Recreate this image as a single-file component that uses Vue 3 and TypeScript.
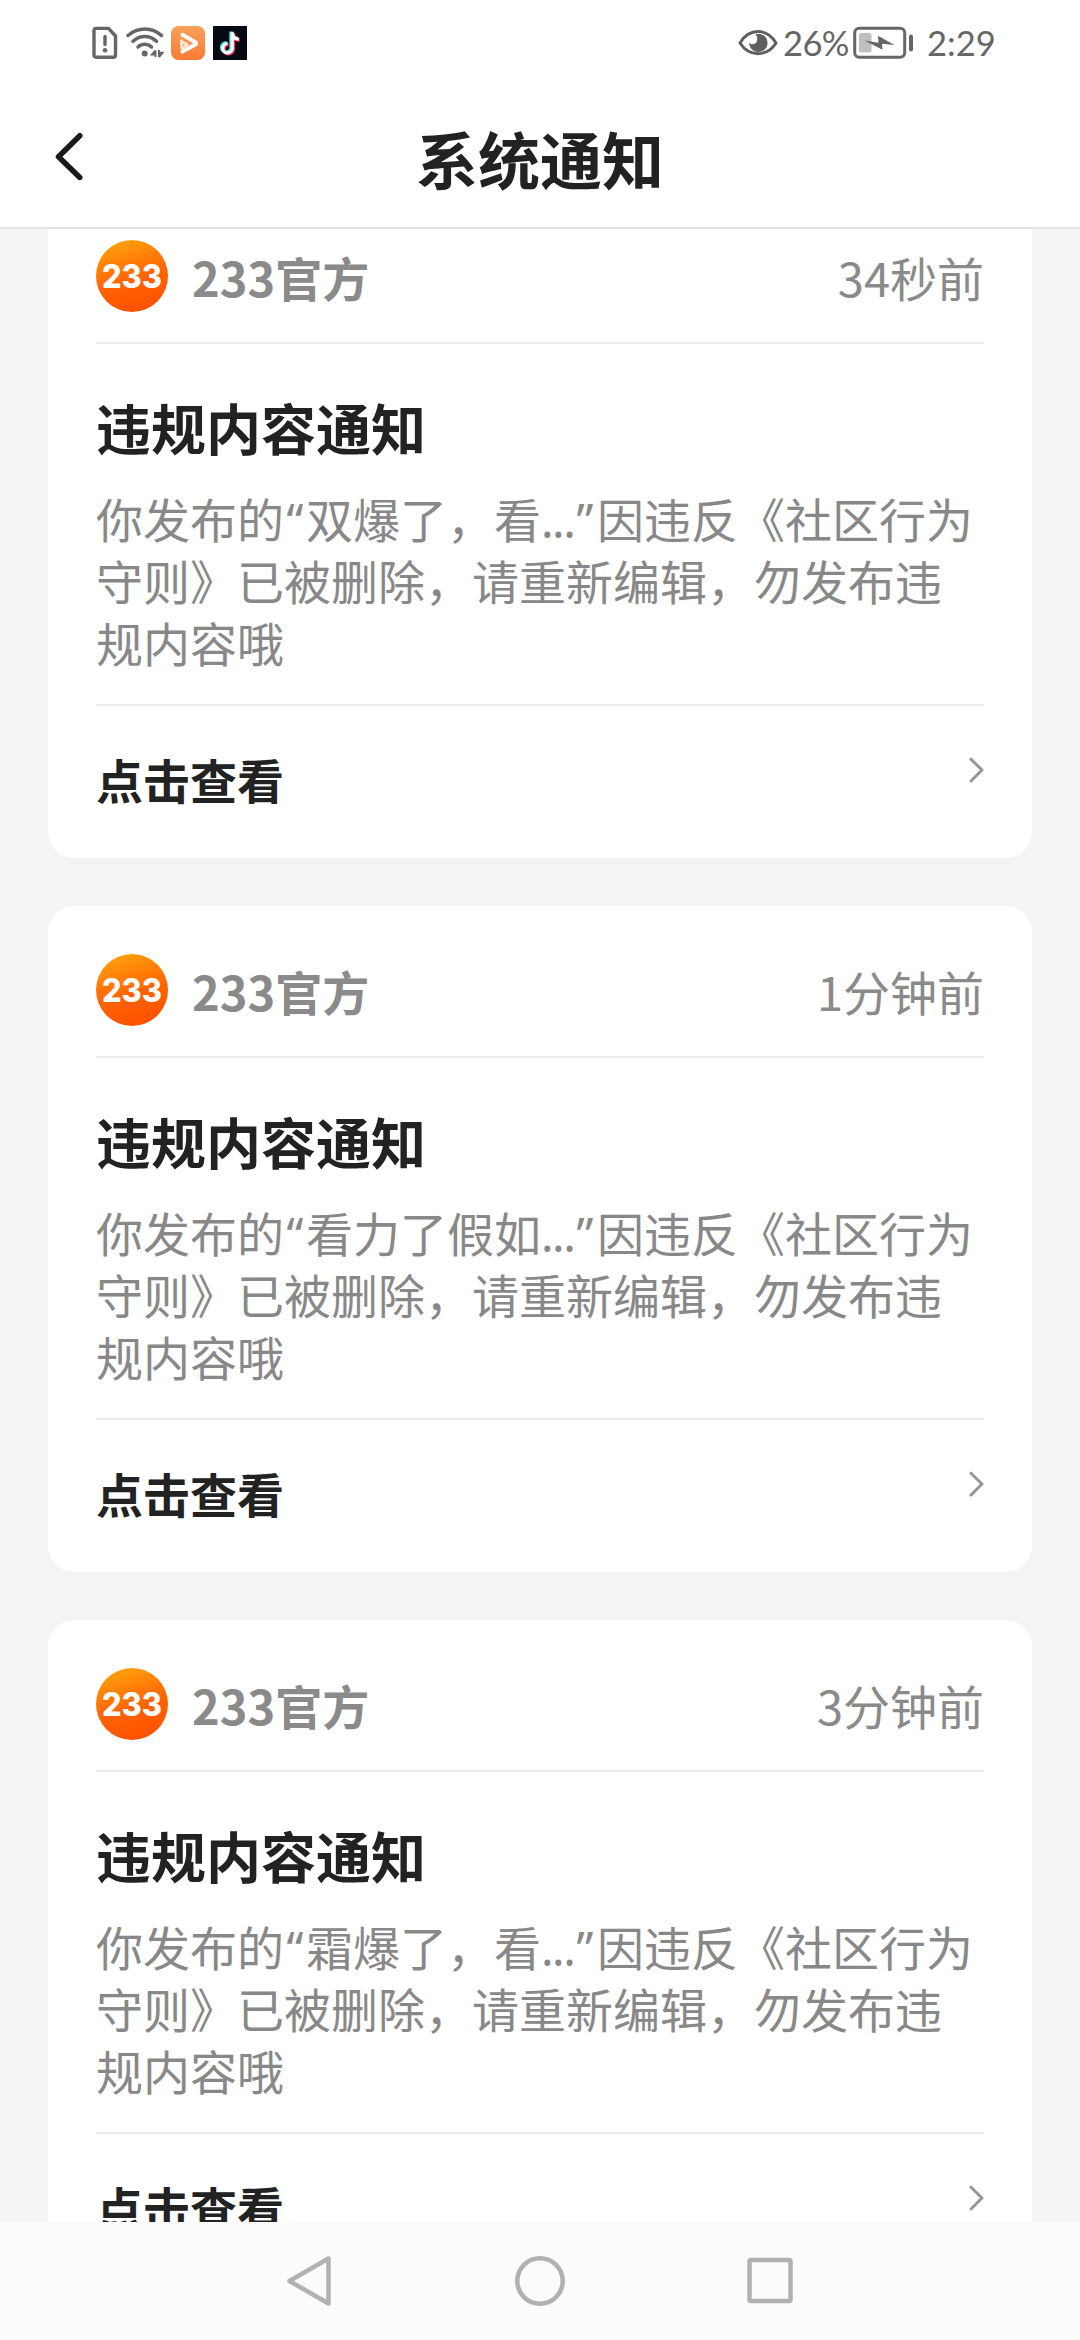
<script setup lang="ts">
interface Notice {
  id: number
  time: string
  excerpt: string
}

const notices: Notice[] = [
  { id: 1, time: '34秒前', excerpt: '双爆了，看' },
  { id: 2, time: '1分钟前', excerpt: '看力了假如' },
  { id: 3, time: '3分钟前', excerpt: '霜爆了，看' },
]
</script>

<template>
  <div class="screen">
    <header class="top">
      <div class="status">
        <div class="status-left">
          <svg class="sim" width="26" height="34" viewBox="0 0 26 34" fill="none" stroke="#666" stroke-width="3.4" stroke-linejoin="round" stroke-linecap="round">
            <path d="M4 2.4h12.5l7 7.6v19.2a2 2 0 0 1-2 2H4a2 2 0 0 1-2-2V4.400a2 2 0 0 1 2-2z" />
            <path d="M13 10.500v8" />
            <circle cx="13" cy="24.300" r="2.300" fill="#666" stroke="none" />
          </svg>
          <svg class="wifi" width="38" height="34" viewBox="0 0 38 34" fill="none" stroke="#666" stroke-width="3.500" stroke-linecap="round">
            <path d="M2 9.500C12 .8 26 .8 35.500 9.500" />
            <path d="M7 15.300c7-6.500 16.500-6.500 23.500 0" />
            <path d="M12 21c4-3.800 9.500-3.800 13.500 0" />
            <circle cx="18.700" cy="27.500" r="3" fill="#666" stroke="none" />
            <path d="M29.500 24.500v6.500M29.500 24.500l-3.500 4h3.500M33 24v7M33 31l3.500-4.300H33" stroke-width="2" stroke-linecap="butt" />
          </svg>
          <svg class="player" width="34" height="34" viewBox="0 0 34 34" fill="none">
            <defs>
              <linearGradient id="playerBg" x1="0" y1="0" x2="0" y2="1">
                <stop offset="0" stop-color="#f7a05c" />
                <stop offset="1" stop-color="#f97b35" />
              </linearGradient>
            </defs>
            <rect width="34" height="34" rx="7.500" fill="url(#playerBg)" />
            <path d="M11.500 8.800 24.800 16.600a1 1 0 0 1 0 1.600L11.500 25.600" stroke="#fff" stroke-width="4" stroke-linejoin="round" stroke-linecap="round" />
            <path d="M10.500 14.500v7.500M10.500 15.500l6 3-5.500 4" stroke="#fff" stroke-opacity=".8" stroke-width="2.600" stroke-linejoin="round" stroke-linecap="round" />
          </svg>
          <svg class="tiktok" width="34" height="34" viewBox="0 0 34 34" fill="none" stroke-width="3.800">
            <rect width="34" height="34" fill="#050a12" />
            <path d="M18.200 5.500v16.200a4.700 4.700 0 1 1-4.700-4.900M18.200 6c.5 4 3 6.200 6.500 6.500" stroke="#2ee6e2" />
            <path d="M20.200 7v16.200a4.700 4.700 0 1 1-4.700-4.900M20.200 7.500c.5 4 3 6.200 6.500 6.500" stroke="#f7355c" />
            <path d="M19.200 6.200v16.200a4.700 4.700 0 1 1-4.700-4.900M19.200 6.700c.5 4 3 6.200 6.500 6.500" stroke="#fff" stroke-width="3.200" />
          </svg>
        </div>
        <div class="status-right">
          <svg class="eye" width="40" height="28" viewBox="0 0 40 28" fill="none">
            <path d="M2 14C11-1.200 29-1.200 38 14 29 28.200 11 28.200 2 14z" stroke="#5f5f5f" stroke-width="3" stroke-linejoin="round" />
            <path d="M17.500 5.200c7.500-1.500 12 3.300 12 8.800 0 5-4 9-9.200 9s-9-4-9.200-9.500c2.500 3.300 7.200 1.500 8-1.700.6-2.600-.2-4.800-1.600-6.600z" fill="#5f5f5f" />
          </svg>
          <span class="pct">26%</span>
          <svg class="battery" width="61" height="34" viewBox="0 0 61 34" fill="none">
            <rect x="1.700" y="2.200" width="50" height="29" rx="4.500" stroke="#666" stroke-width="3" />
            <rect x="6" y="7" width="12.500" height="19.500" rx="2.500" fill="#bfbfbf" />
            <path d="M11.500 14.500 25.500 16.800 25 9.800 41.500 19 29 17.800 29.500 23.800z" fill="#666" />
            <rect x="56" y="8.500" width="4" height="17" rx="2" fill="#666" />
          </svg>
          <span class="clock">2:29</span>
        </div>
      </div>
      <div class="navbar">
        <svg class="back" width="34" height="54" viewBox="0 0 34 54" fill="none" stroke="#1a1a1a" stroke-width="5.500" stroke-linecap="round" stroke-linejoin="round">
          <path d="M27.800 5.700 6.500 26.800 27.800 47.400" />
        </svg>
        <h1>系统通知</h1>
      </div>
    </header>

    <main class="list">
      <article v-for="n in notices" :key="n.id" class="card">
        <div class="card-head">
          <svg class="avatar" width="72" height="72" viewBox="0 0 72 72">
            <defs>
              <linearGradient :id="'avatar' + n.id" x1=".2" y1="0" x2=".5" y2="1">
                <stop offset="0" stop-color="#ffa50c" />
                <stop offset=".6" stop-color="#ff6205" />
                <stop offset="1" stop-color="#ff5200" />
              </linearGradient>
            </defs>
            <circle cx="36" cy="36" r="36" :fill="`url(#avatar${n.id})`" />
            <text class="mark" x="6" y="47.500" textLength="60" lengthAdjust="spacingAndGlyphs">233</text>
          </svg>
          <span class="name">233官方</span>
          <time class="time">{{ n.time }}</time>
        </div>
        <section class="card-body">
          <h2>违规内容通知</h2>
          <p>你发布的<span class="quote">“</span>{{ n.excerpt }}<span class="dots">...</span><span class="quote close">”</span>因违反《社区行为<br />守则》已被删除，请重新编辑，勿发布违<br />规内容哦</p>
        </section>
        <div class="card-foot">
          <span>点击查看</span>
          <svg class="chevron" width="16" height="28" viewBox="0 0 16 28" fill="none" stroke="#969696" stroke-width="3" stroke-linecap="round" stroke-linejoin="round">
            <path d="M3 3.200 14 14 3 25" />
          </svg>
        </div>
      </article>
    </main>

    <nav class="system">
      <svg width="50" height="54" viewBox="0 0 50 54"><path d="M43.500 4.500v45L4.500 27z" /></svg>
      <svg width="54" height="54" viewBox="0 0 54 54"><circle cx="27" cy="27" r="22.700" /></svg>
      <svg width="50" height="54" viewBox="0 0 50 54"><rect x="4.500" y="6" width="41" height="41" rx="1.500" /></svg>
    </nav>
  </div>
</template>

<style>
body {
  margin: 0;
}
</style>

<style scoped>
.screen {
  width: 1080px;
  height: 2340px;
  display: flex;
  flex-direction: column;
  overflow: hidden;
  background: #f4f4f4;
  color: #222;
  font-family: "Noto Sans CJK SC", sans-serif;
}
.screen svg {
  display: block;
  flex: none;
}
.top {
  flex: none;
  height: 229px;
  box-sizing: border-box;
  background: #fff;
  border-bottom: 2px solid #e3e3e3;
}
.status {
  height: 86px;
  padding: 0 87px 0 92px;
  display: flex;
  justify-content: space-between;
  align-items: center;
}
.status-left,
.status-right {
  display: flex;
  align-items: center;
}
.wifi {
  margin-left: 8px;
}
.player {
  margin-left: 7px;
}
.tiktok {
  margin-left: 8px;
}
.status-right {
  color: #666;
  font: 400 34.500px/42px Lato, sans-serif;
}
.pct {
  margin-left: 5px;
  width: 68px;
  white-space: nowrap;
  letter-spacing: -0.6px;
}
.battery {
  margin-left: 2px;
}
.clock {
  margin-left: 13px;
  width: 66px;
  white-space: nowrap;
}
.navbar {
  height: 141px;
  padding: 0 52px;
  display: grid;
  grid-template-columns: 34px 1fr 34px;
  align-items: center;
}
h1 {
  margin: 0;
  padding-top: 3px;
  text-align: center;
  font-size: 62px;
  line-height: 90px;
  font-weight: 700;
}
.list {
  flex: 1;
  min-height: 0;
  overflow: hidden;
  padding: 0 48px;
  display: flex;
  flex-direction: column;
  gap: 48px;
}
.card {
  flex: none;
  height: 666px;
  box-sizing: border-box;
  padding: 48px 48px 0;
  border-radius: 26px;
  background: #fff;
}
.card:first-child {
  margin-top: -37px;
}
.card-head {
  height: 102px;
  padding-bottom: 30px;
  box-sizing: border-box;
  display: flex;
  align-items: center;
  color: #8a8a8a;
  font-size: 47px;
  line-height: 72px;
}
.mark {
  fill: #fff;
  font: 800 32px Inter, sans-serif;
}
.name,
.time {
  padding-top: 2px;
}
.name {
  margin-left: 24px;
  font-weight: 700;
}
.time {
  margin-left: auto;
}
.card-body {
  height: 364px;
  box-sizing: border-box;
  padding-top: 50px;
  border-top: 2px solid #ebebeb;
  border-bottom: 2px solid #ebebeb;
}
h2 {
  margin: 0;
  font-size: 55px;
  line-height: 64px;
  font-weight: 700;
}
p {
  margin: 29px 0 0;
  color: #888;
  font-size: 47px;
  line-height: 62px;
  white-space: nowrap;
}
.quote,
.dots {
  display: inline-block;
  line-height: 1;
  font-family: "Noto Sans", sans-serif;
}
.quote {
  width: 22px;
  text-align: center;
}
.close {
  width: 24px;
}
.dots {
  width: 32px;
  letter-spacing: -1.500px;
}
.card-foot {
  height: 152px;
  padding-bottom: 7px;
  box-sizing: border-box;
  display: flex;
  align-items: center;
  justify-content: space-between;
  font-size: 47px;
  line-height: 64px;
  font-weight: 700;
}
.chevron {
  margin-bottom: 18px;
}
.system {
  flex: none;
  height: 118px;
  background: #fbfbfb;
  display: flex;
  justify-content: center;
  align-items: center;
  gap: 178px;
  fill: none;
  stroke: #b1b1b1;
  stroke-width: 4.500;
  stroke-linejoin: round;
}
</style>
